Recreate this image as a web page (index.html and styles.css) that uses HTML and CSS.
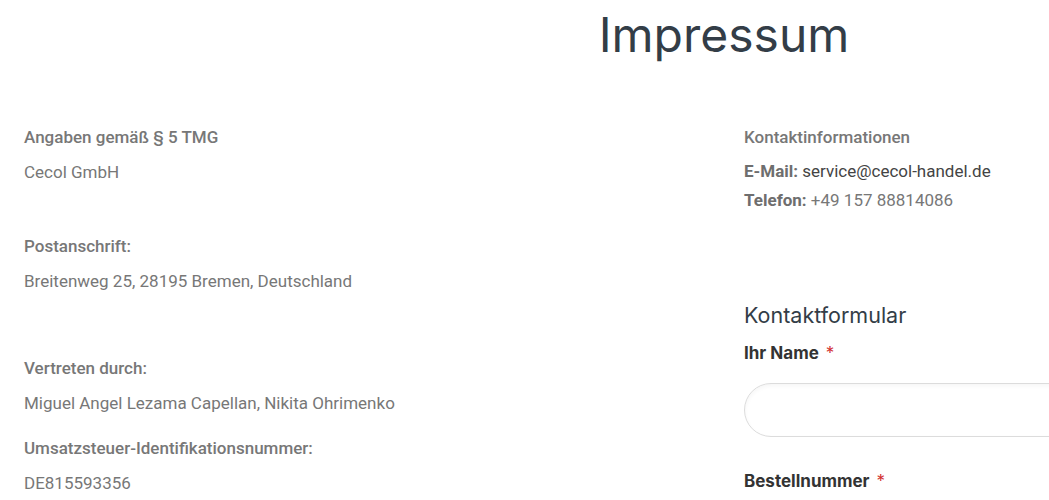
FILE: index.html
```html
<!DOCTYPE html>
<html lang="de">
<head>
    <meta charset="UTF-8">
    <meta name="viewport" content="width=device-width, initial-scale=1.0">
    <title>Impressum</title>
    <link rel="stylesheet" href="styles.css">
</head>
<body>
    <div class="page">
        <h1 class="page-title">Impressum</h1>

        <div class="columns">
            <div class="col">
                <div class="info-block">
                    <h4 class="info-label">Angaben gemäß § 5 TMG</h4>
                    <p class="info-value">Cecol GmbH</p>
                </div>
                <div class="info-block post">
                    <h4 class="info-label">Postanschrift:</h4>
                    <p class="info-value">Breitenweg 25, 28195 Bremen, Deutschland</p>
                </div>
                <div class="info-block vertreten">
                    <h4 class="info-label">Vertreten durch:</h4>
                    <p class="info-value">Miguel Angel Lezama Capellan, Nikita Ohrimenko</p>
                </div>
                <div class="info-block ust">
                    <h4 class="info-label">Umsatzsteuer-Identifikationsnummer:</h4>
                    <p class="info-value">DE815593356</p>
                </div>
            </div>

            <div class="col">
                <h4 class="info-label">Kontaktinformationen</h4>
                <ul class="contact-list">
                    <li><strong>E-Mail:</strong> <a href="#" class="mail">service@cecol-handel.de</a></li>
                    <li><strong>Telefon:</strong> +49 157 88814086</li>
                </ul>

                <form class="contact-form" action="#" method="post">
                    <h3 class="form-title">Kontaktformular</h3>
                    <div class="form-group">
                        <label for="name" class="required">Ihr Name</label>
                        <input type="text" id="name" name="name" required>
                    </div>
                    <div class="form-group">
                        <label for="order" class="required">Bestellnummer</label>
                        <input type="text" id="order" name="order" required>
                    </div>
                </form>
            </div>
        </div>
    </div>
</body>
</html>
```

FILE: styles.css
```css
html, body {
    overflow: hidden;
}
body {
    margin: 0;
    background: #fff;
    font-family: Roboto, "Liberation Sans", sans-serif;
    color: #777;
}
.page {
    width: 1400px;
    padding: 0 24px;
}
.page-title {
    margin: 0;
    padding-top: 3px;
    text-align: center;
    font-family: Inter, "Noto Sans", sans-serif;
    font-weight: 400;
    font-size: 48px;
    line-height: 64px;
    color: #333d47;
}
.columns {
    display: grid;
    grid-template-columns: 1fr 1fr;
    gap: 40px;
    margin-top: 58px;
}
.info-label {
    margin: 0 0 11px;
    font-size: 17px;
    font-weight: 500;
    line-height: 24px;
    color: #777;
}
.info-value {
    margin: 0;
    font-size: 17px;
    line-height: 24px;
}
.post {
    margin-top: 50px;
}
.vertreten {
    margin-top: 63px;
}
.ust {
    margin-top: 21px;
}
.contact-list {
    list-style: none;
    margin: 0;
    padding: 0;
    font-size: 17px;
    line-height: 29px;
    margin-top: -3px;
}
.contact-list strong {
    font-weight: 700;
    color: #6e6e6e;
}
.mail {
    color: #444;
    text-decoration: none;
}
.contact-form {
    margin-top: 86px;
}
.form-title {
    margin: 0 0 12px;
    font-family: Inter, "Noto Sans", sans-serif;
    font-size: 21.5px;
    font-weight: 400;
    line-height: 28px;
    color: #333d47;
}
.form-group {
    margin-bottom: 32px;
}
.form-group label {
    display: block;
    margin-bottom: 18px;
    font-family: Inter, "Noto Sans", sans-serif;
    font-size: 17px;
    font-weight: 700;
    line-height: 24px;
    color: #333;
}
.required:after {
    content: "*";
    margin-left: 7px;
    color: #d23030;
    font-weight: 400;
}
.form-group input {
    display: block;
    box-sizing: border-box;
    width: 100%;
    height: 54px;
    padding: 0 20px;
    border: 1px solid #dcdcdc;
    border-radius: 27px;
    background: #fff;
    box-shadow: inset 0 2px 4px rgba(0, 0, 0, 0.04);
}
```
